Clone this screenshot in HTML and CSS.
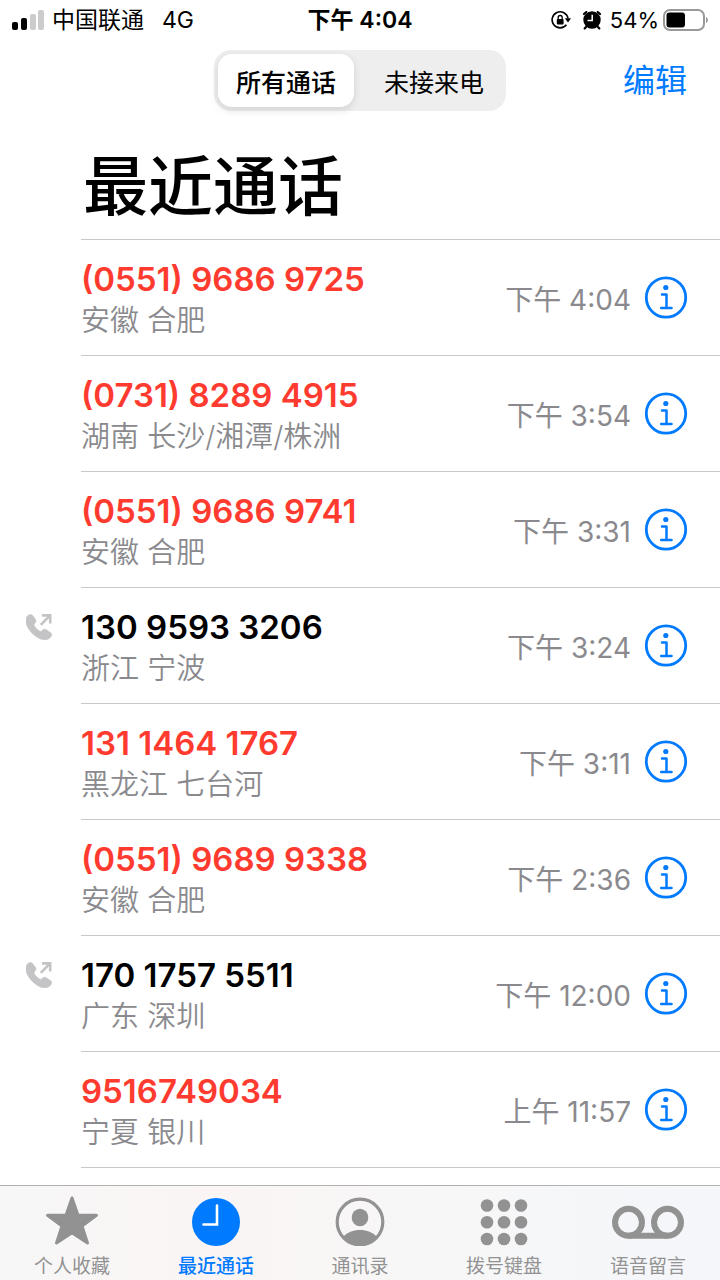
FILE: index.html
```html
<!DOCTYPE html>
<html lang="zh-CN">
<head>
    <meta charset="UTF-8">
    <meta name="viewport" content="width=device-width, initial-scale=1.0">
    <title>最近通话</title>
    <link rel="stylesheet" href="styles.css">
</head>
<body>
    <!-- Shared icons -->
    <svg class="sprite" aria-hidden="true">
        <symbol id="icon-info" viewBox="0 0 44 44">
            <circle cx="22" cy="21.500" r="19.7" fill="none" stroke="currentColor" stroke-width="2.8"/>
            <circle cx="21.8" cy="11.500" r="2.6" fill="currentColor"/>
            <path d="M18 18.500h4.500v13.500M17.200 32h10.300" fill="none" stroke="currentColor" stroke-width="2.500" stroke-linecap="round" stroke-linejoin="round"/>
        </symbol>
        <symbol id="icon-outgoing" viewBox="0 0 26 26">
            <path d="M2.200 1.300C3.800 0 5.600.2 6.800 1.700L9.400 5.300c.9 1.300.7 2.600-.3 3.700l-.7.900c-.5.600-.5 1.200-.1 1.900 1.200 2.100 3.200 4.100 5.400 5.300.7.4 1.300.4 1.900-.2l.9-.8c1.100-1.100 2.300-1.300 3.700-.4l4.300 2.900c1.500 1.100 1.600 2.900.3 4.300-3.200 3.700-8.200 3.600-13.200.6C7.700 21.300 4 17.500 1.800 13.500-.8 8.700-.9 4.100 2.200 1.300z" fill="currentColor" stroke="currentColor" stroke-width=".6"/>
            <path d="M14.800 10.900l9-9.200M16 1.400H24.200V9.600" fill="none" stroke="currentColor" stroke-width="2.600"/>
        </symbol>
    </svg>

    <div class="status-bar">
        <div class="status-left">
            <svg class="signal" viewBox="0 0 32 20" aria-hidden="true">
                <rect x="0" y="12" width="6" height="8" rx="2"/>
                <rect x="9" y="8" width="6" height="12" rx="2"/>
                <rect x="18" y="4" width="6" height="16" rx="2" fill="#ccc"/>
                <rect x="26" y="0" width="6" height="20" rx="2" fill="#ccc"/>
            </svg>
            <span>中国联通</span>
            <span class="network">4G</span>
        </div>
        <div class="status-time">下午 4:04</div>
        <div class="status-right">
            <svg class="lock" viewBox="0 0 20 20" aria-hidden="true">
                <path d="M15.400 14.800A8 8 0 1 1 17 8.500" fill="none" stroke="#000" stroke-width="1.600"/>
                <path d="M13.800 8.200h6.200l-3 4.300z"/>
                <rect x="5.800" y="9" width="6.800" height="5.400" rx="1"/>
                <path d="M7.200 9.500V7.500a2 2 0 0 1 4 0v2" fill="none" stroke="#000" stroke-width="1.300"/>
            </svg>
            <svg class="alarm" viewBox="0 0 20 20" aria-hidden="true">
                <circle cx="10" cy="10" r="8.700"/>
                <path d="M2 4L4.300 2M15.700 2L18 4M4 17l-1.300 1.500M16 17l1.300 1.500" stroke="#000" stroke-width="2.200" stroke-linecap="round"/>
                <path d="M10.200 4.800v5.700H5.500" fill="none" stroke="#fff" stroke-width="1.500"/>
            </svg>
            <span class="charge">54%</span>
            <svg class="battery" viewBox="0 0 46 22" aria-hidden="true">
                <rect x="2" y="1" width="40" height="20" rx="6" fill="none" stroke="#999" stroke-width="2"/>
                <rect x="4.500" y="3.500" width="18.500" height="15" rx="3"/>
                <path d="M44 8c2.500 1 2.500 5 0 6z" fill="#999"/>
            </svg>
        </div>
    </div>

    <header class="toolbar">
        <div class="segmented">
            <button type="button" class="segment active">所有通话</button>
            <button type="button" class="segment">未接来电</button>
        </div>
        <button type="button" class="edit-button">编辑</button>
    </header>

    <main>
        <h1>最近通话</h1>
        <ul class="calls">
            <li class="call missed">
                <div class="call-body">
                    <div class="caller">
                        <p class="number">(0551) 9686 9725</p>
                        <p class="place">安徽 合肥</p>
                    </div>
                    <time>下午 4:04</time>
                    <button type="button" class="info-button" aria-label="详情"><svg><use href="#icon-info"/></svg></button>
                </div>
            </li>
            <li class="call missed">
                <div class="call-body">
                    <div class="caller">
                        <p class="number">(0731) 8289 4915</p>
                        <p class="place">湖南 长沙/湘潭/株洲</p>
                    </div>
                    <time>下午 3:54</time>
                    <button type="button" class="info-button" aria-label="详情"><svg><use href="#icon-info"/></svg></button>
                </div>
            </li>
            <li class="call missed">
                <div class="call-body">
                    <div class="caller">
                        <p class="number">(0551) 9686 9741</p>
                        <p class="place">安徽 合肥</p>
                    </div>
                    <time>下午 3:31</time>
                    <button type="button" class="info-button" aria-label="详情"><svg><use href="#icon-info"/></svg></button>
                </div>
            </li>
            <li class="call">
                <svg class="outgoing" aria-hidden="true"><use href="#icon-outgoing"/></svg>
                <div class="call-body">
                    <div class="caller">
                        <p class="number">130 9593 3206</p>
                        <p class="place">浙江 宁波</p>
                    </div>
                    <time>下午 3:24</time>
                    <button type="button" class="info-button" aria-label="详情"><svg><use href="#icon-info"/></svg></button>
                </div>
            </li>
            <li class="call missed">
                <div class="call-body">
                    <div class="caller">
                        <p class="number">131 1464 1767</p>
                        <p class="place">黑龙江 七台河</p>
                    </div>
                    <time>下午 3:11</time>
                    <button type="button" class="info-button" aria-label="详情"><svg><use href="#icon-info"/></svg></button>
                </div>
            </li>
            <li class="call missed">
                <div class="call-body">
                    <div class="caller">
                        <p class="number">(0551) 9689 9338</p>
                        <p class="place">安徽 合肥</p>
                    </div>
                    <time>下午 2:36</time>
                    <button type="button" class="info-button" aria-label="详情"><svg><use href="#icon-info"/></svg></button>
                </div>
            </li>
            <li class="call">
                <svg class="outgoing" aria-hidden="true"><use href="#icon-outgoing"/></svg>
                <div class="call-body">
                    <div class="caller">
                        <p class="number">170 1757 5511</p>
                        <p class="place">广东 深圳</p>
                    </div>
                    <time>下午 12:00</time>
                    <button type="button" class="info-button" aria-label="详情"><svg><use href="#icon-info"/></svg></button>
                </div>
            </li>
            <li class="call missed">
                <div class="call-body">
                    <div class="caller">
                        <p class="number">9516749034</p>
                        <p class="place">宁夏 银川</p>
                    </div>
                    <time>上午 11:57</time>
                    <button type="button" class="info-button" aria-label="详情"><svg><use href="#icon-info"/></svg></button>
                </div>
            </li>
        </ul>
    </main>

    <nav class="tab-bar">
        <a href="#favorites" class="tab">
            <svg viewBox="0 0 74 52" aria-hidden="true">
                <path d="M37 4L43 21.300L61.500 21.300L47 32L52.500 49L37 38.700L21.500 49L27 32L12.500 21.300L31 21.300Z" fill="currentColor" stroke="currentColor" stroke-width="3" stroke-linejoin="round"/>
            </svg>
            <span>个人收藏</span>
        </a>
        <a href="#recents" class="tab active">
            <svg viewBox="0 0 74 52" aria-hidden="true">
                <circle cx="37" cy="28" r="24" fill="currentColor"/>
                <path d="M38 11.500V30.500H24.500" fill="none" stroke="#fff" stroke-width="2.600" stroke-linecap="round"/>
            </svg>
            <span>最近通话</span>
        </a>
        <a href="#contacts" class="tab">
            <svg viewBox="0 0 74 52" aria-hidden="true">
                <circle cx="37" cy="28" r="22.800" fill="none" stroke="currentColor" stroke-width="3.200"/>
                <ellipse cx="37" cy="23.500" rx="8.300" ry="8.800" fill="currentColor"/>
                <path d="M20.500 42.500C24 38.500 30 36 37 36s13 2.500 16.500 6.500C49.500 48 43.500 51 37 51s-12.500-3-16.500-8.500z" fill="currentColor"/>
            </svg>
            <span>通讯录</span>
        </a>
        <a href="#keypad" class="tab">
            <svg viewBox="0 0 74 52" aria-hidden="true">
                <g fill="currentColor">
                    <circle cx="20" cy="11.500" r="6.300"/><circle cx="37" cy="11.500" r="6.300"/><circle cx="54" cy="11.500" r="6.300"/>
                    <circle cx="20" cy="28.300" r="6.300"/><circle cx="37" cy="28.300" r="6.300"/><circle cx="54" cy="28.300" r="6.300"/>
                    <circle cx="20" cy="45" r="6.300"/><circle cx="37" cy="45" r="6.300"/><circle cx="54" cy="45" r="6.300"/>
                </g>
            </svg>
            <span>拨号键盘</span>
        </a>
        <a href="#voicemail" class="tab">
            <svg viewBox="0 0 74 52" aria-hidden="true">
                <g fill="none" stroke="currentColor" stroke-width="6">
                    <circle cx="17.500" cy="28.300" r="13.500"/>
                    <circle cx="56.500" cy="28.300" r="13.500"/>
                    <path d="M17.500 41.800h39"/>
                </g>
            </svg>
            <span>语音留言</span>
        </a>
    </nav>
</body>
</html>
```
FILE: styles.css
```css
* {
    margin: 0;
    padding: 0;
    box-sizing: border-box;
}

body {
    display: flex;
    flex-direction: column;
    min-height: 100vh;
    background: #fff;
    color: #000;
    font-family: Inter, "Noto Sans CJK SC", sans-serif;
}

button {
    border: none;
    background: none;
    font-family: inherit;
    cursor: pointer;
}

svg {
    display: block;
}

.sprite {
    position: absolute;
    width: 0;
    height: 0;
}

/* Status bar */
.status-bar {
    display: grid;
    grid-template-columns: 1fr auto 1fr;
    align-items: center;
    height: 40px;
    padding: 0 12px;
    font-size: 23px;
    line-height: 40px;
}

.status-left,
.status-right {
    display: flex;
    align-items: center;
}

.status-right {
    justify-content: flex-end;
}

.signal {
    width: 32px;
    height: 20px;
    margin-right: 8px;
}

.network {
    margin-left: 18px;
}

.status-time {
    font-weight: 600;
}

.lock,
.alarm {
    width: 20px;
    height: 20px;
}

.lock {
    margin-right: 11px;
}

.alarm {
    margin-right: 8px;
}

.charge {
    font-size: 22px;
}

.battery {
    width: 46px;
    height: 22px;
    margin-left: 3px;
}

/* Toolbar */
.toolbar {
    display: grid;
    grid-template-columns: 1fr auto 1fr;
    align-items: center;
    padding: 10px 33px 0;
}

.segmented {
    display: flex;
    grid-column: 2;
    gap: 12px;
    padding: 4px;
    border-radius: 17px;
    background: #eee;
}

.segment {
    width: 136px;
    height: 53px;
    border-radius: 14px;
    color: #000;
    font-size: 25px;
}

.segment.active {
    background: #fff;
    box-shadow: 0 3px 8px rgba(0, 0, 0, 0.12);
    font-weight: 500;
}

.edit-button {
    justify-self: end;
    color: #007aff;
    font-size: 32px;
    line-height: 50px;
}

/* Call list */
h1 {
    margin-left: 81px;
    padding: 36px 0 12px 2px;
    border-bottom: 1px solid #c8c8c8;
    font-size: 65px;
    font-weight: 500;
    line-height: 80px;
}

.calls {
    list-style: none;
}

.call {
    position: relative;
    padding-left: 81px;
}

.outgoing {
    position: absolute;
    top: 26px;
    left: 26px;
    width: 26px;
    height: 26px;
    color: #c4c4c6;
}

.call-body {
    display: flex;
    align-items: center;
    padding: 14px 32px 14px 0;
    border-bottom: 1px solid #c8c8c8;
}

.caller {
    flex: 1;
    padding-top: 5px;
}

.number {
    font-size: 33px;
    font-weight: 600;
    line-height: 41px;
}

.missed .number {
    color: #ff3b30;
}

.place {
    color: #8a8a8e;
    font-size: 29px;
    font-weight: 350;
    line-height: 41px;
}

time {
    color: #8a8a8e;
    font-size: 28px;
    font-weight: 400;
}

.info-button {
    margin-left: 13px;
    color: #007aff;
}

.info-button svg {
    width: 44px;
    height: 44px;
}

/* Tab bar */
.tab-bar {
    position: sticky;
    bottom: 0;
    display: flex;
    margin-top: auto;
    padding-top: 8px;
    border-top: 1px solid #b2b2b2;
    background: linear-gradient(to right, #f7f7f7, #faf5f4 30%, #f7f7f7 60%, #f4f6fa);
}

.tab {
    flex: 1;
    color: #929292;
    font-size: 19px;
    line-height: 27px;
    text-align: center;
    text-decoration: none;
}

.tab svg {
    width: 74px;
    height: 52px;
    margin: 0 auto 7px;
}

.tab.active {
    color: #007aff;
    font-weight: 500;
}
```
